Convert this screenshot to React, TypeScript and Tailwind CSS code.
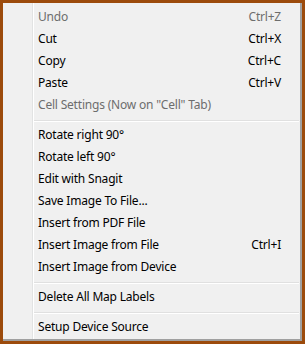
import React from 'react';

type Item =
  | { kind: 'item'; label: string; shortcut?: string; disabled?: boolean }
  | { kind: 'sep' };

const items: Item[] = [
  { kind: 'item', label: 'Undo', shortcut: 'Ctrl+Z', disabled: true },
  { kind: 'item', label: 'Cut', shortcut: 'Ctrl+X' },
  { kind: 'item', label: 'Copy', shortcut: 'Ctrl+C' },
  { kind: 'item', label: 'Paste', shortcut: 'Ctrl+V' },
  { kind: 'item', label: 'Cell Settings (Now on "Cell" Tab)', disabled: true },
  { kind: 'sep' },
  { kind: 'item', label: 'Rotate right 90°' },
  { kind: 'item', label: 'Rotate left 90°' },
  { kind: 'item', label: 'Edit with Snagit' },
  { kind: 'item', label: 'Save Image To File...' },
  { kind: 'item', label: 'Insert from PDF File' },
  { kind: 'item', label: 'Insert Image from File', shortcut: 'Ctrl+I' },
  { kind: 'item', label: 'Insert Image from Device' },
  { kind: 'sep' },
  { kind: 'item', label: 'Delete All Map Labels' },
  { kind: 'sep' },
  { kind: 'item', label: 'Setup Device Source' },
];

export default function App() {
  return (
    <div
      className="w-[305px] h-[344px] bg-[#9c4b0c] p-[3px]"
      style={{ fontFamily: '"Noto Sans", "DejaVu Sans", sans-serif' }}
    >
      <div className="relative w-[299px] h-[338px] bg-[#f0f0f0] border-r-2 border-b-2 border-[#a0a0a0] pt-[3px]">
        {/* left gutter line */}
        <div className="absolute left-[29px] top-0 bottom-0 w-[2px] border-l border-[#e2e3e3] bg-white" />

        {items.map((it, i) =>
          it.kind === 'sep' ? (
            <div key={i} className="h-[8px] pt-[4px] pl-[31px] pr-[1px]">
              <div className="h-[2px] border-t border-[#e0e0e0] bg-white" />
            </div>
          ) : (
            <div
              key={i}
              className={`relative flex items-center h-[22px] pl-[35px] pr-[19px] text-[12px] leading-none tracking-[-0.2px] ${
                it.disabled ? 'text-[#6d6d6d]' : 'text-black'
              }`}
            >
              <span className="flex-1 whitespace-nowrap">{it.label}</span>
              {it.shortcut && <span className="whitespace-nowrap">{it.shortcut}</span>}
            </div>
          )
        )}
      </div>
    </div>
  );
}
